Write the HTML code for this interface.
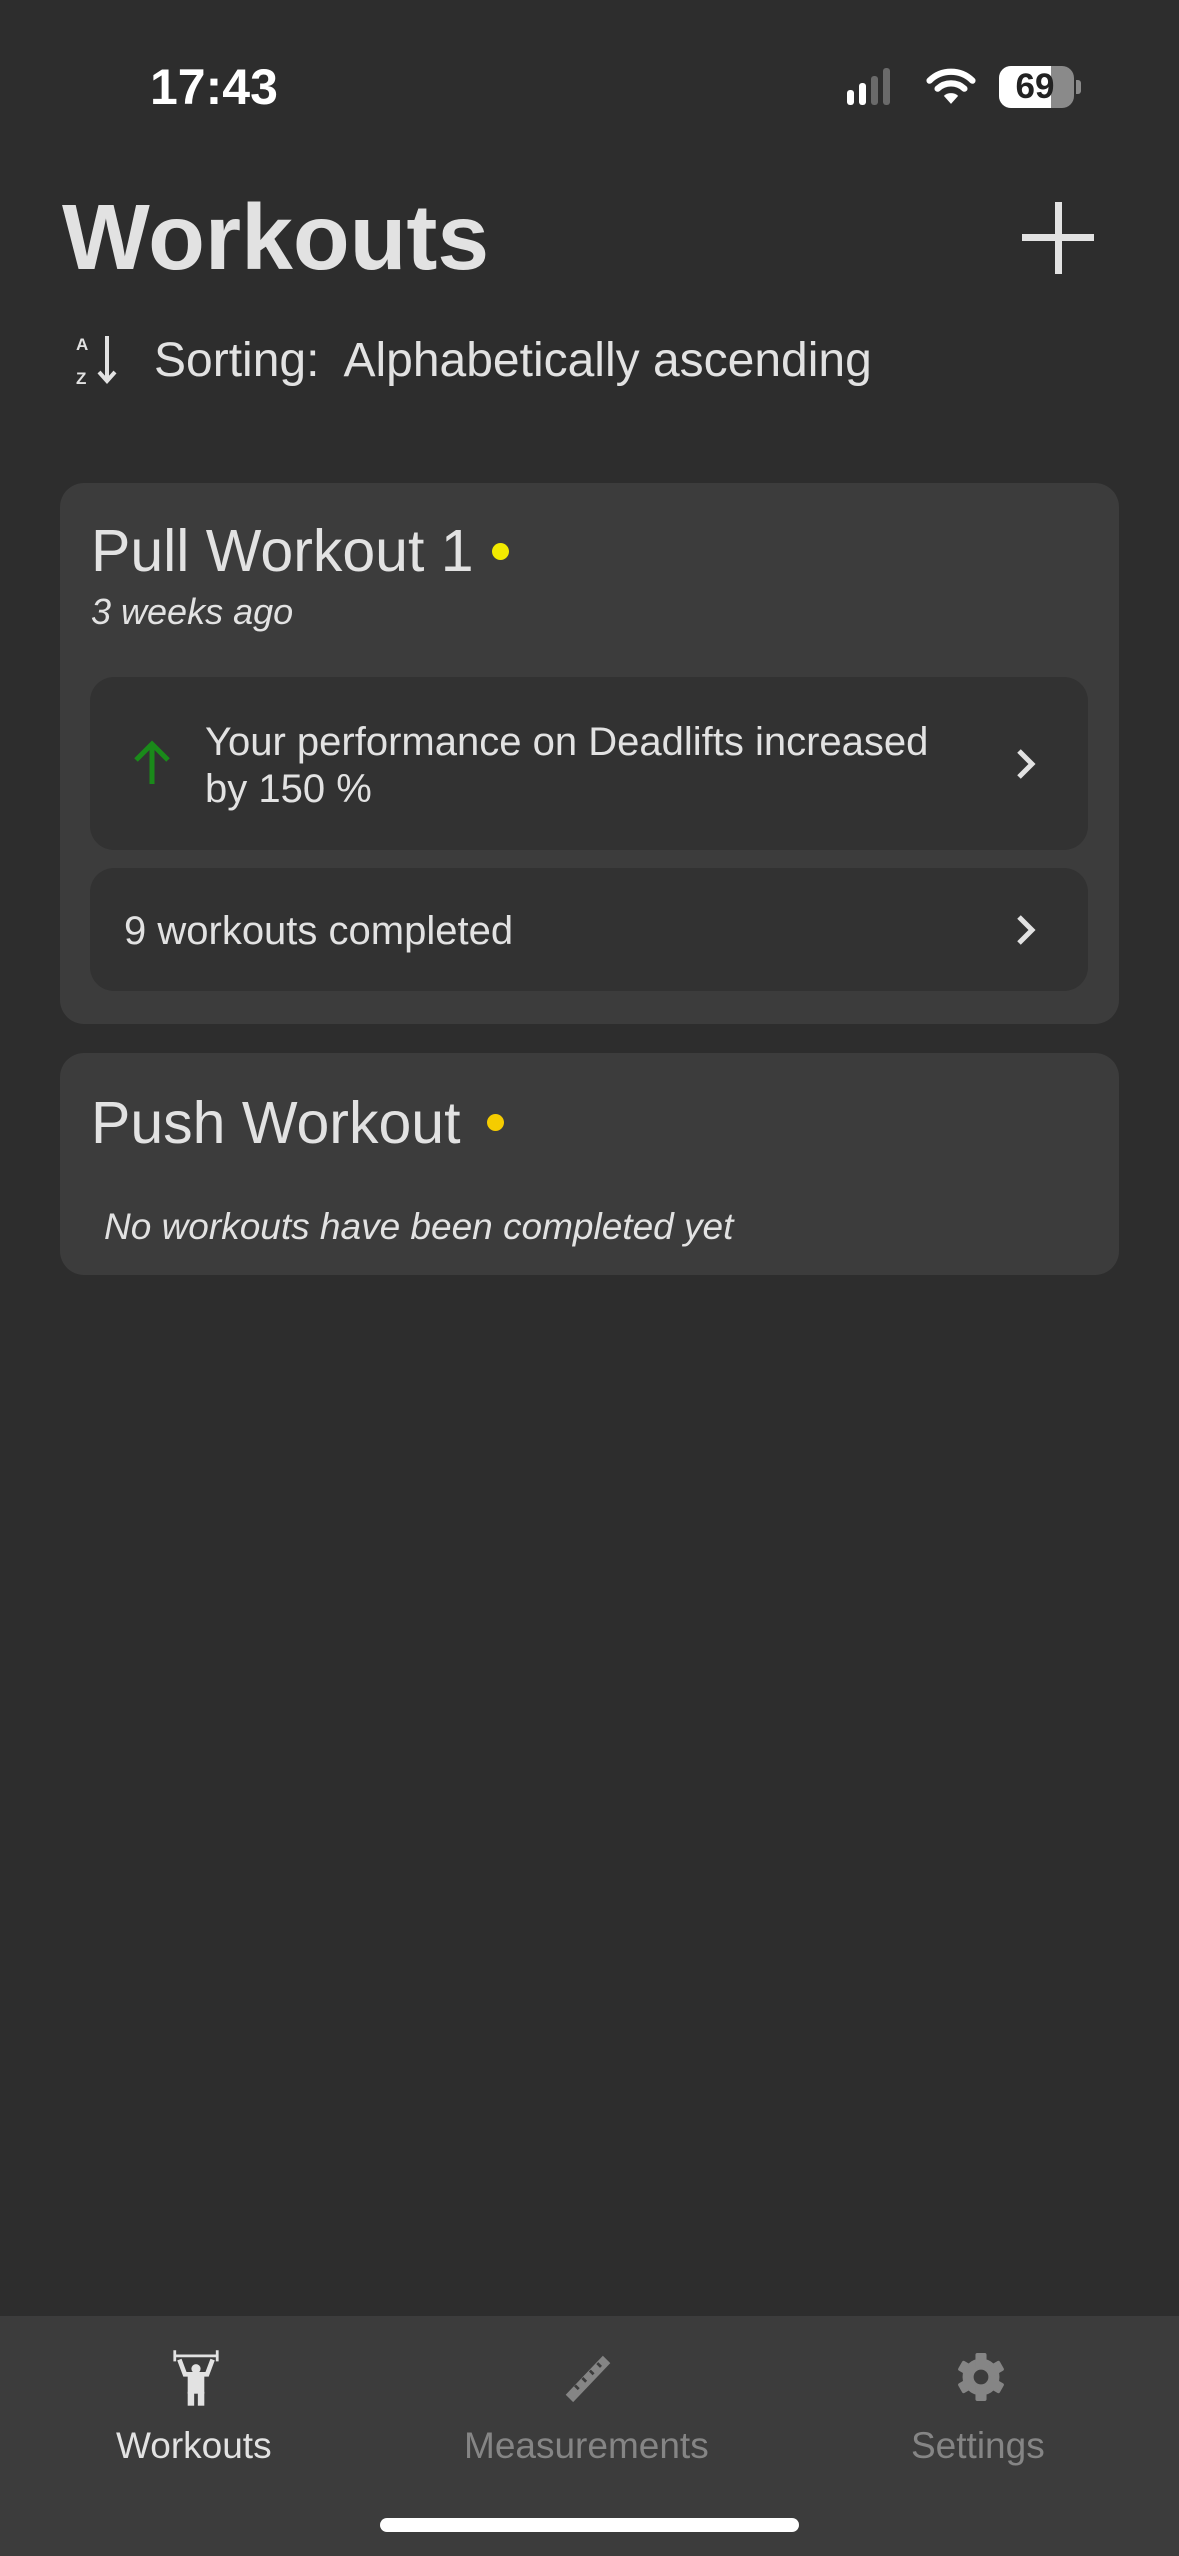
<!DOCTYPE html>
<html><head><meta charset="utf-8"><style>
*{margin:0;padding:0;box-sizing:border-box}
body{width:1179px;height:2556px;background:#2d2d2d;font-family:"Liberation Sans",sans-serif;color:#e2e2e2;position:relative;overflow:hidden}
.a{position:absolute;white-space:nowrap}
.card{position:absolute;left:60px;width:1059px;background:#3c3c3c;border-radius:24px}
.inner{position:absolute;left:30px;width:998px;background:#323232;border-radius:24px}
.dot{position:absolute;width:17px;height:17px;border-radius:50%}
</style></head><body>
<div class="a" style="left:150px;top:58px;font-size:50px;font-weight:bold;color:#fff">17:43</div>
<svg class="a" style="left:845px;top:68px" width="56" height="38"><rect x="2" y="22" width="7" height="15" rx="3" fill="#fff"/><rect x="14" y="15" width="7" height="22" rx="3" fill="#fff"/><rect x="26" y="8" width="7" height="29" rx="3" fill="#6a6a6a"/><rect x="38" y="0" width="7" height="37" rx="3" fill="#6a6a6a"/></svg>
<svg class="a" style="left:926px;top:66px" width="50" height="40" viewBox="0 0 56 44"><path d="M4 16 A34 34 0 0 1 52 16" stroke="#fff" stroke-width="7" fill="none" stroke-linecap="round"/><path d="M13 25 A22 22 0 0 1 43 25" stroke="#fff" stroke-width="7" fill="none" stroke-linecap="round"/><path d="M28 42 L20 33 A12 12 0 0 1 36 33 Z" fill="#fff"/></svg>
<div class="a" style="left:999px;top:66px;width:75px;height:42px;border-radius:12px;background:#8a8a8a;overflow:hidden"><div style="width:52px;height:42px;background:#fff"></div></div>
<div class="a" style="left:999px;top:67px;width:72px;text-align:center;font-size:35px;font-weight:bold;color:#222">69</div>
<div class="a" style="left:1076px;top:80px;width:5px;height:14px;background:#8a8a8a;border-radius:0 3px 3px 0"></div>
<div class="a" style="left:62px;top:184px;font-size:93px;font-weight:bold;color:#e2e2e2">Workouts</div>
<div class="a" style="left:1022px;top:234px;width:72px;height:7px;background:#e2e2e2"></div>
<div class="a" style="left:1055px;top:202px;width:7px;height:72px;background:#e2e2e2"></div>
<div class="a" style="left:76px;top:336px;font-size:17px;font-weight:bold;line-height:17px;color:#e2e2e2">A<br>&nbsp;<br>Z</div>
<svg class="a" style="left:96px;top:336px" width="22" height="48"><path d="M11 0 V44 M3 36 L11 45 L19 36" stroke="#e2e2e2" stroke-width="4" fill="none"/></svg>
<div class="a" style="left:154px;top:333px;font-size:48px">Sorting:&nbsp; Alphabetically ascending</div>

<div class="card" style="top:483px;height:541px">
 <div class="a" style="left:31px;top:34px;font-size:59px">Pull Workout 1</div>
 <div class="dot" style="left:432px;top:60px;background:#f2ea00"></div>
 <div class="a" style="left:31px;top:108px;font-size:36px;font-style:italic">3 weeks ago</div>
 <div class="inner" style="top:194px;height:173px">
  <svg class="a" style="left:42px;top:63px" width="40" height="44"><path d="M20 44 V4 M4 20 L20 4 L36 20" stroke="#1a8a1a" stroke-width="5" fill="none"/></svg>
  <div class="a" style="left:115px;top:42px;font-size:40px;line-height:47px">Your performance on Deadlifts increased<br>by 150 %</div>
  <svg class="a" style="left:925px;top:71px" width="22" height="32"><path d="M4 3 L17 16 L4 29" stroke="#e2e2e2" stroke-width="5" fill="none"/></svg>
 </div>
 <div class="inner" style="top:385px;height:123px">
  <div class="a" style="left:34px;top:41px;font-size:40px">9 workouts completed</div>
  <svg class="a" style="left:925px;top:46px" width="22" height="32"><path d="M4 3 L17 16 L4 29" stroke="#e2e2e2" stroke-width="5" fill="none"/></svg>
 </div>
</div>

<div class="card" style="top:1053px;height:222px">
 <div class="a" style="left:31px;top:36px;font-size:59px">Push Workout</div>
 <div class="dot" style="left:427px;top:61px;background:#f5cc00"></div>
 <div class="a" style="left:44px;top:153px;font-size:37px;font-style:italic">No workouts have been completed yet</div>
</div>

<div class="a" style="left:0;top:2316px;width:1179px;height:240px;background:#3c3c3c"></div>
<svg class="a" style="left:172px;top:2350px" width="48" height="56" viewBox="0 0 52 60"><path d="M3 0 V12 M49 0 V12 M3 6 H49" stroke="#e2e2e2" stroke-width="3" fill="none"/><path d="M8 10 L14 26 H38 L44 10" stroke="#e2e2e2" stroke-width="5" fill="none"/><circle cx="26" cy="20" r="5" fill="#e2e2e2"/><rect x="17" y="27" width="18" height="20" fill="#e2e2e2"/><rect x="17" y="45" width="7" height="15" fill="#e2e2e2"/><rect x="28" y="45" width="7" height="15" fill="#e2e2e2"/></svg>
<div class="a" style="left:116px;top:2425px;font-size:37px;color:#e2e2e2">Workouts</div>
<svg class="a" style="left:562px;top:2352px" width="52" height="52" viewBox="0 0 56 56"><path d="M4 46 L44 4 L52 12 L12 54 Z" fill="#858585"/><path d="M14 36 l4 4 M22 28 l4 4 M30 20 l4 4 M38 12 l4 4" stroke="#3c3c3c" stroke-width="3"/></svg>
<div class="a" style="left:464px;top:2425px;font-size:37px;color:#858585">Measurements</div>
<svg class="a" style="left:957px;top:2351px" width="48" height="52" viewBox="0 0 52 56"><g fill="#858585"><circle cx="26" cy="28" r="20"/><rect x="20" y="2" width="12" height="52" rx="2"/><rect x="20" y="2" width="12" height="52" rx="2" transform="rotate(60 26 28)"/><rect x="20" y="2" width="12" height="52" rx="2" transform="rotate(120 26 28)"/></g><circle cx="26" cy="28" r="8" fill="#3c3c3c"/></svg>
<div class="a" style="left:911px;top:2425px;font-size:37px;color:#858585">Settings</div>
<div class="a" style="left:380px;top:2518px;width:419px;height:14px;border-radius:7px;background:#fff"></div>
</body></html>
